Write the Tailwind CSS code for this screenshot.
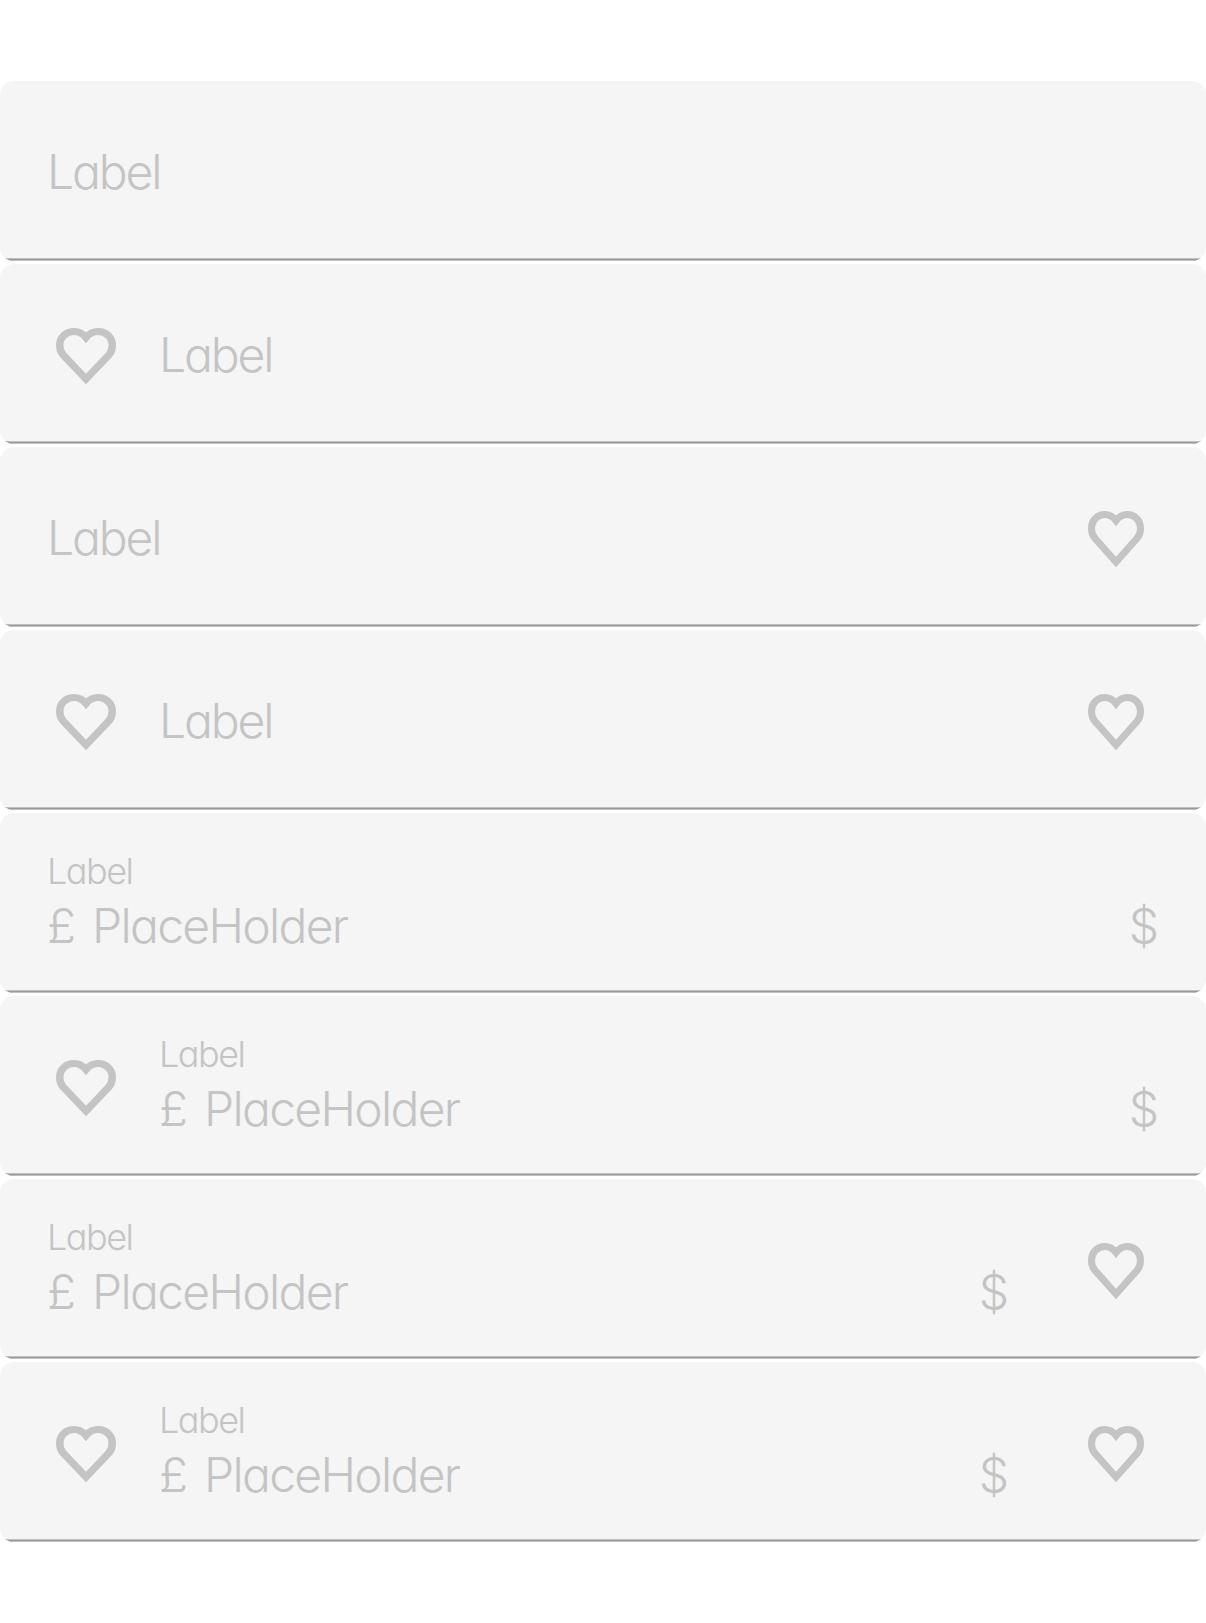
<!DOCTYPE html>
<html lang="en">
<head>
<meta charset="utf-8">
<title>Text fields</title>
<script src="https://cdn.jsdelivr.net/npm/@tailwindcss/browser@4"></script>
</head>
<body class="bg-white">
<svg class="hidden">
  <symbol id="heart" viewBox="0 0 56 56" preserveAspectRatio="none">
    <path d="M28 9.500C25 5.600 21.200 3.500 16.700 3.500C9.200 3.500 3.500 9.500 3.500 17.300C3.500 21.500 4.500 24.500 6.600 26.900L28 51L49.400 26.900C51.500 24.500 52.500 21.500 52.500 17.300C52.500 9.500 46.800 3.500 39.300 3.500C34.800 3.500 31 5.600 28 9.500Z" fill="none" stroke="#c4c4c4" stroke-width="7" stroke-linejoin="miter"/>
  </symbol>
</svg>
<main class="flex h-[1623px] w-[1206px] flex-col gap-[3px] overflow-hidden pt-[81px] font-['Inter',sans-serif] font-light text-[#c4c4c4] [font-feature-settings:'cv11'_1] [font-optical-sizing:none]">
  <div class="flex h-[180px] shrink-0 flex-col overflow-hidden rounded-[14px] bg-[#f5f5f5]">
    <div class="flex h-[177px] items-center pl-[47px] pr-12">
      <span class="pt-[5px] text-[48px] leading-[60px] tracking-[-2.1px]">Label</span>
    </div>
    <div class="h-[3px] border-y border-[#c0c0c0] bg-[#999]"></div>
  </div>
  <div class="flex h-[180px] shrink-0 flex-col overflow-hidden rounded-[14px] bg-[#f5f5f5]">
    <div class="flex h-[177px] items-center pl-14 pr-12">
      <svg class="mt-[7px] h-14 w-[60px]"><use href="#heart"/></svg>
      <span class="ml-[43px] pt-[5px] text-[48px] leading-[60px] tracking-[-2.1px]">Label</span>
    </div>
    <div class="h-[3px] border-y border-[#c0c0c0] bg-[#999]"></div>
  </div>
  <div class="flex h-[180px] shrink-0 flex-col overflow-hidden rounded-[14px] bg-[#f5f5f5]">
    <div class="flex h-[177px] items-center pl-[47px] pr-[62px]">
      <span class="pt-[5px] text-[48px] leading-[60px] tracking-[-2.1px]">Label</span>
      <svg class="ml-auto mt-[7px] size-14"><use href="#heart"/></svg>
    </div>
    <div class="h-[3px] border-y border-[#c0c0c0] bg-[#999]"></div>
  </div>
  <div class="flex h-[180px] shrink-0 flex-col overflow-hidden rounded-[14px] bg-[#f5f5f5]">
    <div class="flex h-[177px] items-center pl-14 pr-[62px]">
      <svg class="mt-[7px] h-14 w-[60px]"><use href="#heart"/></svg>
      <span class="ml-[43px] pt-[5px] text-[48px] leading-[60px] tracking-[-2.1px]">Label</span>
      <svg class="ml-auto mt-[7px] size-14"><use href="#heart"/></svg>
    </div>
    <div class="h-[3px] border-y border-[#c0c0c0] bg-[#999]"></div>
  </div>
  <div class="flex h-[180px] shrink-0 flex-col overflow-hidden rounded-[14px] bg-[#f5f5f5]">
    <div class="flex h-[177px] items-center pl-[47px] pr-[50px]">
      <div class="flex flex-1 flex-col pt-[2px]">
        <span class="text-[36px] leading-[44px] tracking-[-1.5px]">Label</span>
        <div class="mt-[3px] flex text-[48px] leading-[60px]"><span class="w-[45px]">£</span><span class="tracking-[-1.7px]">PlaceHolder</span><span class="ml-auto flex w-6 justify-center">$</span></div>
      </div>
    </div>
    <div class="h-[3px] border-y border-[#c0c0c0] bg-[#999]"></div>
  </div>
  <div class="flex h-[180px] shrink-0 flex-col overflow-hidden rounded-[14px] bg-[#f5f5f5]">
    <div class="flex h-[177px] items-center pl-14 pr-[50px]">
      <svg class="mt-[7px] h-14 w-[60px]"><use href="#heart"/></svg>
      <div class="ml-[43px] flex flex-1 flex-col pt-[2px]">
        <span class="text-[36px] leading-[44px] tracking-[-1.5px]">Label</span>
        <div class="mt-[3px] flex text-[48px] leading-[60px]"><span class="w-[45px]">£</span><span class="tracking-[-1.7px]">PlaceHolder</span><span class="ml-auto flex w-6 justify-center">$</span></div>
      </div>
    </div>
    <div class="h-[3px] border-y border-[#c0c0c0] bg-[#999]"></div>
  </div>
  <div class="flex h-[180px] shrink-0 flex-col overflow-hidden rounded-[14px] bg-[#f5f5f5]">
    <div class="flex h-[177px] items-center pl-[47px] pr-[62px]">
      <div class="flex flex-1 flex-col pt-[2px]">
        <span class="text-[36px] leading-[44px] tracking-[-1.5px]">Label</span>
        <div class="mt-[3px] flex text-[48px] leading-[60px]"><span class="w-[45px]">£</span><span class="tracking-[-1.7px]">PlaceHolder</span><span class="ml-auto flex w-6 justify-center">$</span></div>
      </div>
      <svg class="ml-[82px] mt-[7px] size-14"><use href="#heart"/></svg>
    </div>
    <div class="h-[3px] border-y border-[#c0c0c0] bg-[#999]"></div>
  </div>
  <div class="flex h-[180px] shrink-0 flex-col overflow-hidden rounded-[14px] bg-[#f5f5f5]">
    <div class="flex h-[177px] items-center pl-14 pr-[62px]">
      <svg class="mt-[7px] h-14 w-[60px]"><use href="#heart"/></svg>
      <div class="ml-[43px] flex flex-1 flex-col pt-[2px]">
        <span class="text-[36px] leading-[44px] tracking-[-1.5px]">Label</span>
        <div class="mt-[3px] flex text-[48px] leading-[60px]"><span class="w-[45px]">£</span><span class="tracking-[-1.7px]">PlaceHolder</span><span class="ml-auto flex w-6 justify-center">$</span></div>
      </div>
      <svg class="ml-[82px] mt-[7px] size-14"><use href="#heart"/></svg>
    </div>
    <div class="h-[3px] border-y border-[#c0c0c0] bg-[#999]"></div>
  </div>
</main>
</body>
</html>
